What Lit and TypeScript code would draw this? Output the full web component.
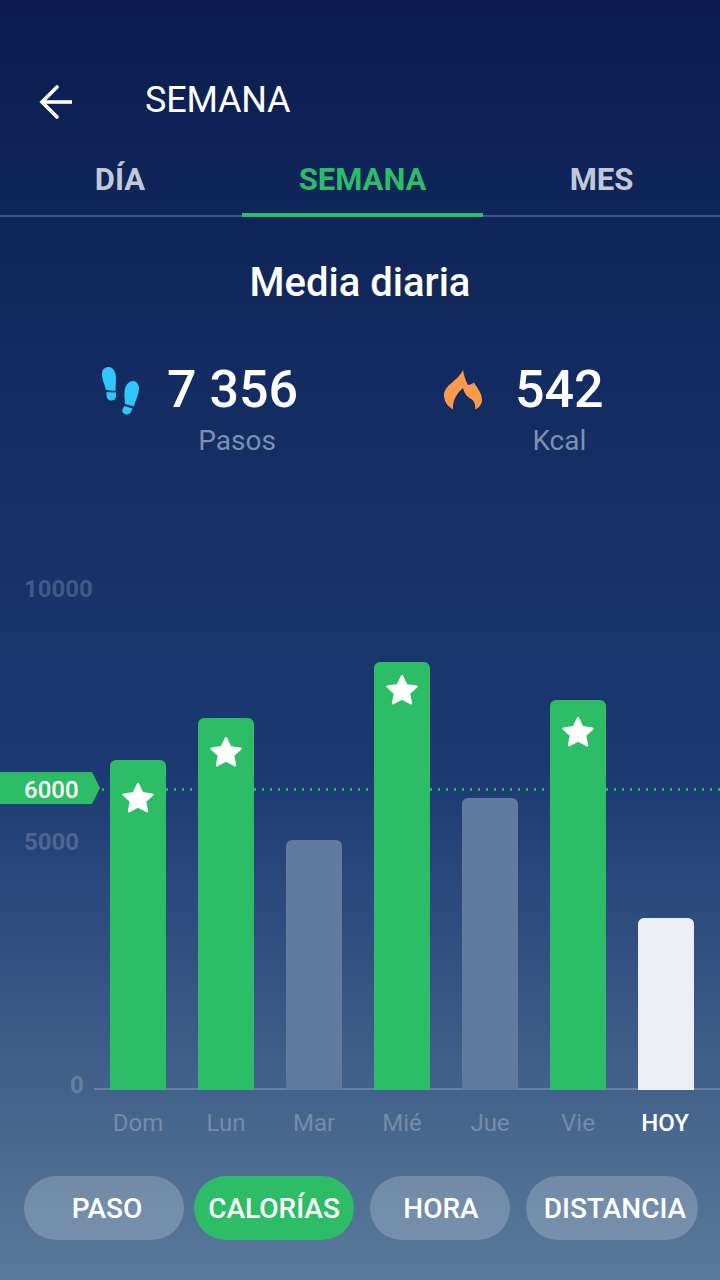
import { LitElement, html, css, svg } from "lit";
import { customElement } from "lit/decorators.js";

const BARS = [
  { label: "Dom", h: 330, kind: "hit", star: 22 },
  { label: "Lun", h: 372, kind: "hit", star: 18 },
  { label: "Mar", h: 250, kind: "miss", star: -1 },
  { label: "Mié", h: 428, kind: "hit", star: 12 },
  { label: "Jue", h: 292, kind: "miss", star: -1 },
  { label: "Vie", h: 390, kind: "hit", star: 16 },
  { label: "HOY", h: 172, kind: "today", star: -1 },
];
const AXIS = [
  { t: "10000", y: 15 },
  { t: "5000", y: 268 },
  { t: "0", y: 511, x: 70 },
];
const PILLS = [
  { t: "PASO", w: 160, ml: 0, pl: 6 },
  { t: "CALORÍAS", w: 160, ml: 10, on: true, pl: 0 },
  { t: "HORA", w: 140, ml: 16, pl: 2 },
  { t: "DISTANCIA", w: 172, ml: 16, pl: 6 },
];

const star = svg`<svg class="star" viewBox="0 0 34 32" width="34" height="32"><path fill="#fff" stroke="#fff" stroke-width="2.4" stroke-linejoin="round" d="M17 2.2 L21.3 11.3 L31.4 12.6 L24 19.4 L26 29.3 L17 24.4 L8 29.3 L10 19.4 L2.6 12.6 L12.7 11.3 Z"/></svg>`;

@customElement("app-root")
export class AppRoot extends LitElement {
  static styles = css`
    :host {
      display: block;
      width: 720px;
      height: 1280px;
      overflow: hidden;
      font-family: Roboto, "Liberation Sans", sans-serif;
      color: #fff;
      background: linear-gradient(180deg, #0b1d50 0%, #1b3a72 60%, #5a7a9b 100%);
    }
    .header { height: 80px; margin-top: 60px; display: flex; align-items: center; }
    .back { margin-left: 39px; width: 36px; height: 36px; margin-top: 3px; }
    .title { margin-left: 70px; font-size: 36px; font-weight: 400; line-height: 80px; letter-spacing: -0.2px; }
    .tabs { height: 75px; display: grid; grid-template-columns: 242px 241px 237px; grid-template-rows: 75px; border-bottom: 2px solid #3f5684; box-sizing: content-box; }
    .tab { position: relative; height: 75px; text-align: center; font-size: 31px; font-weight: 700; line-height: 80px; color: #c2c8d6; }
    .tab:first-child { padding-right: 2px; }
    .tab.on { color: #2dbd66; }
    .tab.on::after { content: ""; position: absolute; left: 0; right: 0; bottom: -2px; height: 4px; background: #2dbd66; }
    h1 { margin: 41px 0 0; height: 50px; text-align: center; font-size: 40px; font-weight: 500; line-height: 50px; }
    .stats { height: 90px; margin-top: 52px; display: flex; }
    .stat { display: flex; }
    .stat.steps { margin-left: 100px; width: 344px; }
    .stat svg { display: block; }
    .steps svg { margin-top: 6px; }
    .fire svg { margin-top: 10px; }
    .stat .vals { text-align: center; }
    .steps .vals { margin-left: 27px; }
    .fire .vals { margin-left: 33px; }
    .num { font-size: 52px; font-weight: 500; line-height: 60px; }
    .unit { font-size: 28px; line-height: 36px; color: #7c90b0; margin-top: 3px; }
    .steps .unit { padding-left: 9px; }
    .chart { position: relative; height: 530px; margin-top: 110px; }
    .axis { position: absolute; font-size: 24px; font-weight: 700; line-height: 28px; color: rgba(255, 255, 255, 0.2); }
    .base { position: absolute; left: 94px; right: 0; bottom: 0; height: 2px; background: rgba(255, 255, 255, 0.2); }
    .bars { position: absolute; inset: 0 0 0 110px; display: flex; align-items: flex-end; gap: 32px; }
    .bar { width: 56px; border-radius: 6px 6px 0 0; display: flex; justify-content: center; align-items: flex-start; }
    .bar.hit { background: #2dbd66; }
    .bar.miss { background: #627a9d; }
    .bar.today { background: #eceef4; }
    .star { display: block; }
    .dots { position: absolute; left: 102px; right: 0; top: 228px; height: 3px; background-image: repeating-linear-gradient(90deg, #27ac60 0 2px, transparent 2px 8px); }
    .tag { position: absolute; left: 0; top: 212px; width: 100px; height: 32px; background: #2dbd66; clip-path: polygon(0 0, 92px 0, 100px 16px, 92px 32px, 0 32px); font-size: 24px; font-weight: 500; line-height: 36px; padding-left: 24px; box-sizing: border-box; }
    .labels { display: flex; gap: 32px; padding-left: 110px; margin-top: 17px; height: 32px; }
    .labels span { width: 56px; text-align: center; font-size: 24px; line-height: 32px; color: rgba(255, 255, 255, 0.25); white-space: nowrap; }
    .labels span.today { color: #fff; font-weight: 500; padding-right: 2px; box-sizing: border-box; }
    .pills { display: flex; padding-left: 24px; margin-top: 37px; }
    .pill { height: 64px; border-radius: 32px; background: rgba(255, 255, 255, 0.2); font-size: 28px; font-weight: 500; line-height: 66px; text-align: center; white-space: nowrap; box-sizing: border-box; }
    .pill.on { background: #2dbd66; }
  `;

  render() {
    return html`
      <div class="header">
        <svg class="back" viewBox="0 0 36 36" fill="none" stroke="#fff" stroke-width="3.6" stroke-linecap="round" stroke-linejoin="miter">
          <path d="M33 18 H4" stroke-linecap="butt" />
          <path d="M18 3 L3 18 L18 33" />
        </svg>
        <div class="title">SEMANA</div>
      </div>
      <div class="tabs">
        <div class="tab">DÍA</div>
        <div class="tab on">SEMANA</div>
        <div class="tab">MES</div>
      </div>
      <h1>Media diaria</h1>
      <div class="stats">
        <div class="stat steps">
          <svg width="40" height="50" viewBox="0 0 40 50" fill="#2ec6fb">
            <path d="M2 8 C2 3 5 1 9 1 C13 1 16 6 16 12 C16 17 15.5 21 15.5 25 L6 24 C5 19 2 14 2 8Z" />
            <path d="M6.5 26 L16 26.5 L16 30 C16 33 14 34.5 11 34.5 C8 34.5 6.5 32 6.5 29Z" />
            <path d="M39 22 C39 18 36 15 33 15 C28 15 25 20 24.5 26 C24 31 25 35 25 38 L34 40.5 C35 35 39 29 39 22Z" />
            <path d="M24.5 40 L32.5 42.5 L31 46 C30 48 27 49 24.5 48 C22.5 47 22 45 22.5 43Z" />
          </svg>
          <div class="vals"><div class="num">7 356</div><div class="unit">Pasos</div></div>
        </div>
        <div class="stat fire">
          <svg width="38" height="40" viewBox="0 0 38 40" fill="#fc9a4c">
            <path d="M9 39.5 C3 36 0 31 0 25 C0 15 14 11 19 0 C20 5 21 10 24 15 C26 15 28 14 30 12.5 C33 18 38 23 38 30 C38 34 35 38 31 39.5 C32 35 30 31 27 29 C24 27 21 25 19 18 C14 22 8 30 9 39.5Z" />
          </svg>
          <div class="vals"><div class="num">542</div><div class="unit">Kcal</div></div>
        </div>
      </div>
      <div class="chart">
        ${AXIS.map((a) => html`<div class="axis" style="top:${a.y}px;left:${a.x ?? 24}px">${a.t}</div>`)}
        <div class="base"></div>
        <div class="dots"></div>
        <div class="bars">
          ${BARS.map(
            (b) => html`<div class="bar ${b.kind}" style="height:${b.h}px">
              ${b.star >= 0 ? html`<div style="margin-top:${b.star}px">${star}</div>` : ""}
            </div>`
          )}
        </div>
        <div class="tag">6000</div>
      </div>
      <div class="labels">
        ${BARS.map((b) => html`<span class=${b.kind === "today" ? "today" : ""}>${b.label}</span>`)}
      </div>
      <div class="pills">
        ${PILLS.map(
          (p) => html`<div class="pill ${p.on ? "on" : ""}" style="width:${p.w}px;margin-left:${p.ml}px;padding-left:${p.pl}px">${p.t}</div>`
        )}
      </div>
    `;
  }
}
